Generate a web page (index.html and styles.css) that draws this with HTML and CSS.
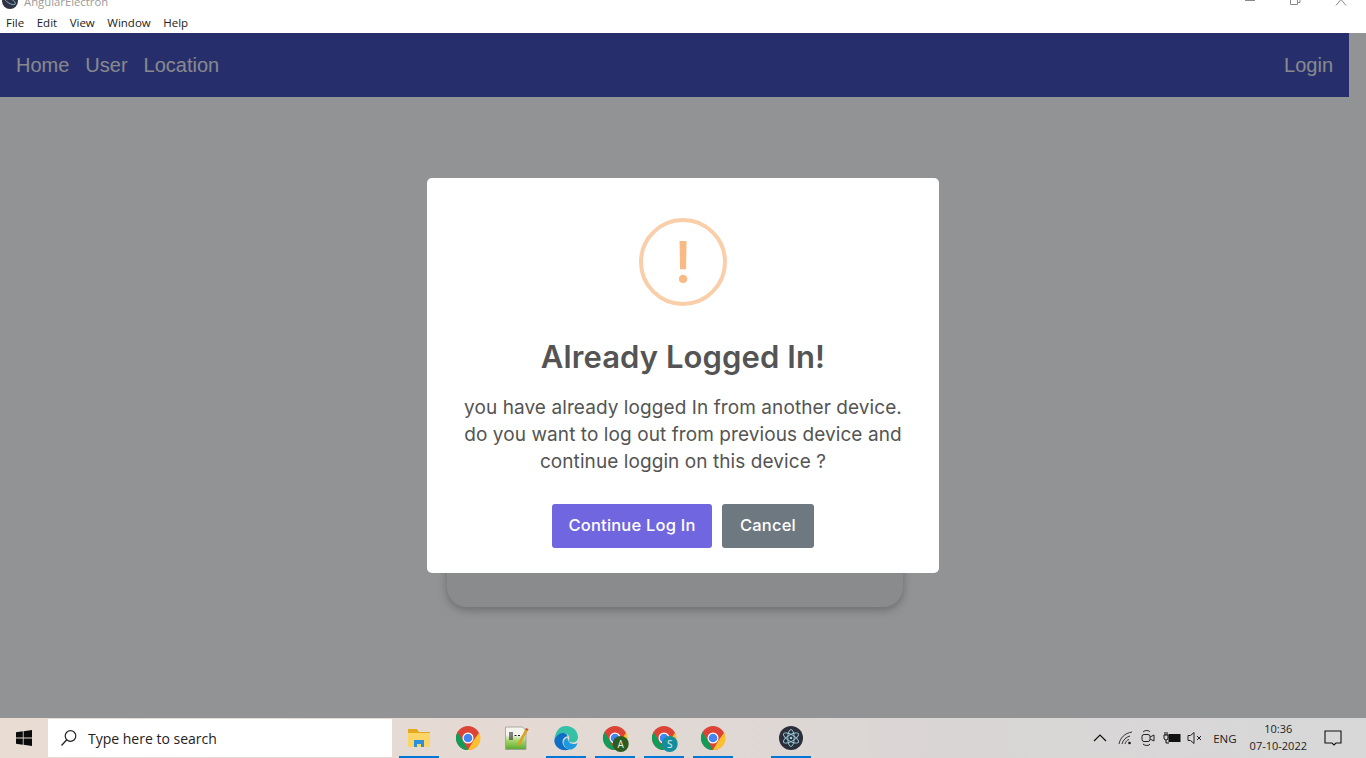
FILE: index.html
```html
<!DOCTYPE html>
<html lang="en">
<head>
    <meta charset="UTF-8">
    <title>AngularElectron</title>
    <link rel="stylesheet" href="styles.css">
</head>
<body>
<div class="titlebar">
    <div class="titlerow">
        <svg class="appicon" viewBox="0 0 16 16"><circle cx="8" cy="8" r="8" fill="#2f3242"/><ellipse cx="8" cy="8" rx="6" ry="2.4" fill="none" stroke="#9feaf9" stroke-width=".6" transform="rotate(30 8 8)"/></svg>
        <span class="apptitle">AngularElectron</span>
        <div class="winbtns">
            <svg class="winbtn" viewBox="0 0 12 12"><path d="M2 3.500h10" stroke="#8a8a8a" fill="none"/></svg>
            <svg class="winbtn" viewBox="0 0 12 12"><path d="M1.500 .5v7h7v-7M3.500 .5v-1M8.500 5.500h2.500v-6" stroke="#8a8a8a" fill="none"/></svg>
            <svg class="winbtn" viewBox="0 0 12 12"><path d="M1 8.500l5-6 5 6" stroke="#8a8a8a" fill="none"/></svg>
        </div>
    </div>
    <div class="menubar">
        <span>File</span><span>Edit</span><span>View</span><span>Window</span><span>Help</span>
    </div>
</div>

<div class="appwindow">
    <nav class="navbar">
        <div class="navlinks">
            <a>Home</a><a>User</a><a>Location</a>
        </div>
        <a>Login</a>
    </nav>
    <div class="content">
        <div class="behindcard"></div>
    </div>
    <div class="backdrop"></div>
    <div class="dialog">
        <div class="warnicon"><span>!</span></div>
        <h2 class="dialogtitle">Already Logged In!</h2>
        <p class="dialogtext">you have already logged In from another device.<br>do you want to log out from previous device and<br>continue loggin on this device ?</p>
        <div class="actions">
            <button class="btn btnconfirm">Continue Log In</button>
            <button class="btn btncancel">Cancel</button>
        </div>
    </div>
</div>

<footer class="taskbar">
    <div class="startbtn">
        <svg viewBox="0 0 16 16" width="16" height="16"><path d="M0 2.300l6.800-1v6.200H0zM7.600 1.200L16 0v7.500H7.600zM0 8.400h6.800v6.300L0 13.700zM7.600 8.400H16V16l-8.400-1.200z" fill="#0b0b0b"/></svg>
    </div>
    <div class="searchbox">
        <svg viewBox="0 0 18 18" width="18" height="18"><circle cx="10.500" cy="7" r="5.300" fill="none" stroke="#222" stroke-width="1.200"/><path d="M6.800 10.800L1.500 16.500" stroke="#222" stroke-width="1.300" fill="none"/></svg>
        <span>Type here to search</span>
    </div>
    <div class="tasks">
        <div class="task active">
            <svg viewBox="0 0 24 24" width="24" height="24"><path d="M1 3h9l2 3h11v5H1z" fill="#e5a91f"/><path d="M1 7h22v14H1z" fill="#fbd667"/><path d="M7 21v-7h10v7h-3v-3h-4v3z" fill="#2a8fdc"/></svg>
        </div>
        <div class="task">
            <svg viewBox="0 0 24 24" width="24" height="24"><use href="#chromeicon"/></svg>
        </div>
        <div class="task">
            <svg viewBox="0 0 24 24" width="24" height="24"><defs><linearGradient id="notegreen" x1="0" y1="0" x2="0" y2="1"><stop offset=".35" stop-color="#f4f4ee"/><stop offset=".6" stop-color="#a8d66c"/><stop offset="1" stop-color="#5aa92e"/></linearGradient></defs><path d="M.5 1h17l3.500 3.500V23.500H.5z" fill="url(#notegreen)" stroke="#9a9a9a" stroke-width=".8"/><path d="M5 6v8M7 6v8M9.500 9.500h2M13 9.500h2" stroke="#222" stroke-width="1.100" fill="none"/><path d="M13 17L21 2l2.500 1.300-8 15-3 1.700z" fill="#d9a228"/><path d="M21 2l2.500 1.300-.8 1.500-2.500-1.300z" fill="#c9552d"/></svg>
        </div>
        <div class="task active">
            <svg viewBox="0 0 24 24" width="24" height="24"><path d="M12 0c7 0 12 5 12 11.500 0 3-2.500 5-5.500 5-2.500 0-4-1-4-2 0-.6.800-.8.800-2.500 0-2.500-2-4.500-5-4.500-5 0-8.300 3.500-10 7C1 6 5 0 12 0z" fill="#35c1a5"/><path d="M.3 14.500C2 9.500 5.500 7 9 7c2.500 0 4.500 1.500 4.500 3.500-3 0-5 2.500-5 5.500 0 3.500 3 6.700 7 7.500C7 26 .5 21 .3 14.500z" fill="#0f6fc6"/><path d="M15.500 23.500c-4-1-6-4-6-7 0-2 1-4 4-5 0 3 2 6.500 6 6.500 2 0 3.500-.5 4-1-1 3.500-4 7-8 6.500z" fill="#1e9be0"/></svg>
        </div>
        <div class="task active">
            <svg viewBox="0 0 24 24" width="24" height="24"><use href="#chromeicon"/><circle cx="17.700" cy="18" r="8" fill="#2c5c20"/><text x="17.700" y="21.500" class="badgeletter">A</text></svg>
        </div>
        <div class="task active">
            <svg viewBox="0 0 24 24" width="24" height="24"><use href="#chromeicon"/><circle cx="17.700" cy="18" r="8" fill="#128e9e"/><text x="17.700" y="21.500" class="badgeletter">S</text></svg>
        </div>
        <div class="task active">
            <svg viewBox="0 0 24 24" width="24" height="24"><use href="#chromeicon"/></svg>
        </div>
        <div class="task gap active">
            <svg viewBox="0 0 24 24" width="24" height="24"><circle cx="12" cy="12" r="12" fill="#2b2e3b"/><g fill="none" stroke="#9fcfdc" stroke-width=".9"><ellipse cx="12" cy="12" rx="8.500" ry="3.200" transform="rotate(30 12 12)"/><ellipse cx="12" cy="12" rx="8.500" ry="3.200" transform="rotate(90 12 12)"/><ellipse cx="12" cy="12" rx="8.500" ry="3.200" transform="rotate(150 12 12)"/></g><circle cx="12" cy="12" r="1.300" fill="#9fcfdc"/></svg>
        </div>
    </div>
    <div class="tray">
        <svg viewBox="0 0 14 14" width="14" height="14"><path d="M1 10l6-6 6 6" fill="none" stroke="#111" stroke-width="1.200"/></svg>
        <svg class="traywifi" viewBox="0 0 16 16" width="16" height="16"><path d="M1 14C2 8 7 3 14 2M4 14c1-4 4-7 8-8M7 14c.5-2 2-4 4-4.500" fill="none" stroke="#333" stroke-width="1"/><circle cx="11.500" cy="13" r="1.300" fill="#111"/></svg>
        <svg viewBox="0 0 16 18" width="16" height="18"><path d="M3 3c2-2 6-2 7 0M3 15c2 2 6 2 7 0" fill="none" stroke="#222"/><rect x="2" y="5.500" width="8" height="7" rx="2" fill="none" stroke="#222"/><path d="M10 8l4-2v6l-4-2" fill="none" stroke="#222"/></svg>
        <svg class="traybattery" viewBox="0 0 18 14" width="18" height="14"><rect x="6" y="3.500" width="11" height="7" fill="#111" stroke="#111"/><path d="M1 4h4v3a2 2 0 0 1-4 0zM2 1v3M4 1v3M3 9v3h3" fill="none" stroke="#111"/></svg>
        <svg viewBox="0 0 16 14" width="16" height="14"><path d="M1 4.500h2.500L7 1.500v11L3.500 9.500H1z" fill="none" stroke="#222"/><path d="M10 5l4 4M14 5l-4 4" stroke="#222" fill="none"/></svg>
        <span class="lang">ENG</span>
        <div class="clock"><span>10:36</span><span>07-10-2022</span></div>
        <svg class="notify" viewBox="0 0 18 18" width="18" height="18"><path d="M1 2h16v12h-5l-2 2-2-2H1z" fill="none" stroke="#111" stroke-width="1.100"/></svg>
    </div>
</footer>

<svg class="defs" width="0" height="0">
    <defs>
        <g id="chromeicon">
            <circle cx="12" cy="12" r="12" fill="#db4437"/>
            <path d="M12 24l5.200-9 6-8.500A12 12 0 0 1 12 24z" fill="#fbc02d"/>
            <path d="M1.600 6L7 15l5 9A12 12 0 0 1 1.600 6z" fill="#0f9d58"/>
            <circle cx="12" cy="12" r="5.500" fill="#fff"/>
            <circle cx="12" cy="12" r="4.300" fill="#4285f4"/>
        </g>
    </defs>
</svg>
</body>
</html>
```
FILE: styles.css
```css
* {
    box-sizing: border-box;
}
html, body {
    margin: 0;
    height: 100%;
    overflow: hidden;
}
body {
    display: flex;
    flex-direction: column;
    height: 758px;
    background: #fff;
    font-family: "Liberation Sans", Arial, sans-serif;
}
svg {
    overflow: visible;
}

/* window frame */
.titlebar {
    height: 33px;
    background: #fff;
    flex: none;
}
.titlerow {
    height: 14px;
    display: flex;
    align-items: flex-start;
    overflow: hidden;
    padding-left: 2px;
}
.appicon {
    width: 16px;
    height: 16px;
    flex: none;
    margin-top: -7px;
}
.apptitle {
    font-family: "Open Sans", sans-serif;
    font-size: 11.3px;
    color: #9a9a9a;
    margin: -5px 0 0 6px;
    line-height: 14px;
}
.winbtns {
    margin-left: auto;
    display: flex;
    gap: 34px;
    padding-right: 19px;
}
.winbtn {
    width: 12px;
    height: 12px;
    margin-top: -3px;
}
.menubar {
    display: flex;
    gap: 12.5px;
    padding-left: 6px;
    font-family: "Open Sans", sans-serif;
    font-size: 11.5px;
    line-height: 18px;
    color: #222;
}

/* app */
.appwindow {
    flex: 1;
    position: relative;
    display: flex;
    flex-direction: column;
    background: #fff;
    min-height: 0;
}
.navbar {
    height: 64px;
    flex: none;
    margin-right: 17px;
    padding: 0 16px;
    background: #2e3cb1;
    display: flex;
    align-items: center;
    justify-content: space-between;
    font-size: 20px;
    color: #eaeaf0;
}
.navlinks {
    display: flex;
    gap: 16px;
}
.content {
    flex: 1;
    display: flex;
    justify-content: center;
    align-items: flex-end;
    padding: 0 17px 111px 0;
}
.behindcard {
    width: 456px;
    height: 300px;
    background: #efefef;
    border-radius: 20px;
    box-shadow: 0 3px 10px rgba(0, 0, 0, .3);
}
.backdrop {
    position: absolute;
    inset: 0;
    background: rgba(30, 32, 34, .485);
}
.dialog {
    position: absolute;
    left: 427px;
    top: 145px;
    width: 512px;
    height: 395px;
    background: #fff;
    border-radius: 5px;
    display: flex;
    flex-direction: column;
    align-items: center;
    padding-top: 40px;
    font-family: Inter, sans-serif;
}
.warnicon {
    width: 88px;
    height: 88px;
    border: 4px solid #facea8;
    border-radius: 50%;
    display: flex;
    align-items: center;
    justify-content: center;
    color: #f8bb86;
    font-size: 58px;
    font-weight: 500;
    line-height: 1;
}
.dialogtitle {
    margin: 31px 0 0;
    font-size: 31px;
    letter-spacing: .1px;
    line-height: 40px;
    font-weight: 600;
    color: #545454;
}
.dialogtext {
    margin: 17px 0 0;
    text-align: center;
    font-size: 19px;
    letter-spacing: .08px;
    line-height: 27px;
    color: #545454;
}
.actions {
    display: flex;
    gap: 10px;
    margin-top: 29px;
}
.btn {
    height: 44px;
    border: 0;
    border-radius: 3px;
    padding: 0 0 2px;
    color: #fff;
    font-family: Inter, sans-serif;
    font-size: 16.5px;
    font-weight: 500;
    letter-spacing: .2px;
}
.btnconfirm {
    width: 160px;
    background: #7066e0;
}
.btncancel {
    width: 92px;
    background: #6e7881;
}

/* windows taskbar */
.taskbar {
    height: 40px;
    flex: none;
    display: flex;
    align-items: stretch;
    background: linear-gradient(90deg, #e8dcd3 0%, #e4dad3 40%, #d9d5d5 70%, #d8d8d8 100%);
    font-family: "Open Sans", sans-serif;
    color: #222;
}
.startbtn {
    width: 48px;
    display: flex;
    align-items: center;
    justify-content: center;
}
.searchbox {
    width: 344px;
    height: 38px;
    margin-top: 1px;
    padding-left: 12px;
    display: flex;
    align-items: center;
    gap: 10px;
    background: #fff;
    font-size: 14px;
}
.tasks {
    display: flex;
    margin-left: 7px;
}
.task {
    width: 40px;
    margin-right: 9px;
    display: flex;
    align-items: center;
    justify-content: center;
    border-bottom: 2px solid transparent;
    padding-top: 1px;
}
.task.active {
    border-bottom-color: #0078d7;
}
.task.gap {
    margin-left: 29px;
}
.badgeletter {
    font-family: "Open Sans", sans-serif;
    font-size: 10px;
    fill: #e8f0e8;
    text-anchor: middle;
}
.tray {
    margin-left: auto;
    display: flex;
    align-items: center;
    gap: 6px;
    padding-right: 24px;
}
.traywifi {
    margin-left: 5px;
}
.traybattery {
    margin-left: 1px;
}
.lang {
    font-size: 11.5px;
    margin-left: 4px;
}
.clock {
    display: flex;
    flex-direction: column;
    align-items: center;
    font-size: 11px;
    line-height: 17px;
    margin-left: 7px;
    padding-bottom: 2px;
}
.notify {
    margin-left: 11px;
}
.defs {
    position: absolute;
}
```
